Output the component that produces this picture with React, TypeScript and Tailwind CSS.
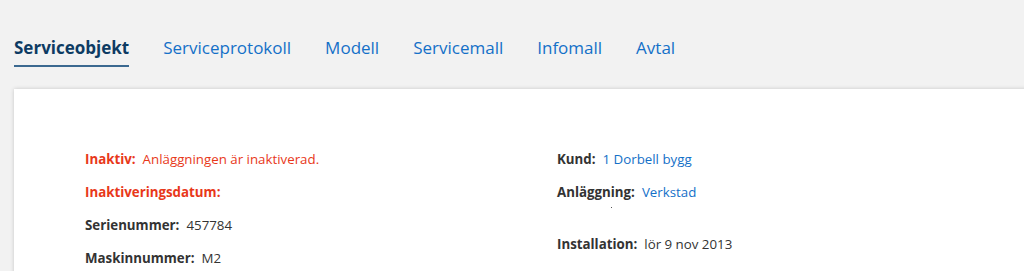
const tabs = ["Serviceprotokoll", "Modell", "Servicemall", "Infomall", "Avtal"]

function Row({ label, children, red }: { label: string; children?: React.ReactNode; red?: boolean }) {
  return (
    <div className={`flex h-[33px] items-center gap-[7px] ${red ? "text-[#e8381a]" : "text-[#333333]"}`}>
      <span className="font-bold">{label}</span>
      {children}
    </div>
  )
}

export default function App() {
  return (
    <div className="h-[271px] overflow-hidden bg-[#f2f2f2] font-['Open_Sans',sans-serif]">
      <nav className="flex gap-[34px] px-[14px] pt-[35px] text-[17px]">
        <div className="border-b-2 border-[#3b6990] pb-[4px] font-bold text-[#0d3b63]">Serviceobjekt</div>
        {tabs.map((t) => (
          <div key={t} className="pb-[4px] text-[#1470c8]">{t}</div>
        ))}
      </nav>
      <div className="ml-[14px] mt-[22px] h-[200px] w-[1030px] bg-white shadow-[0_0_4px_rgba(0,0,0,0.18)]">
        <div className="grid grid-cols-[472px_1fr] pl-[71px] pt-[55px] text-[13.3px]">
          <div>
            <Row label="Inaktiv:" red>
              <span>Anläggningen är inaktiverad.</span>
            </Row>
            <Row label="Inaktiveringsdatum:" red />
            <Row label="Serienummer:">
              <span>457784</span>
            </Row>
            <Row label="Maskinnummer:">
              <span>M2</span>
            </Row>
          </div>
          <div>
            <Row label="Kund:">
              <a className="text-[#1470c8]">1 Dorbell bygg</a>
            </Row>
            <Row label="Anläggning:">
              <a className="text-[#1470c8]">Verkstad</a>
            </Row>
            <div className="relative h-[19px]">
              <span className="absolute left-[54px] top-[-3px] h-[1px] w-[1px] bg-[#555]"></span>
            </div>
            <Row label="Installation:">
              <span>lör 9 nov 2013</span>
            </Row>
          </div>
        </div>
      </div>
    </div>
  )
}
